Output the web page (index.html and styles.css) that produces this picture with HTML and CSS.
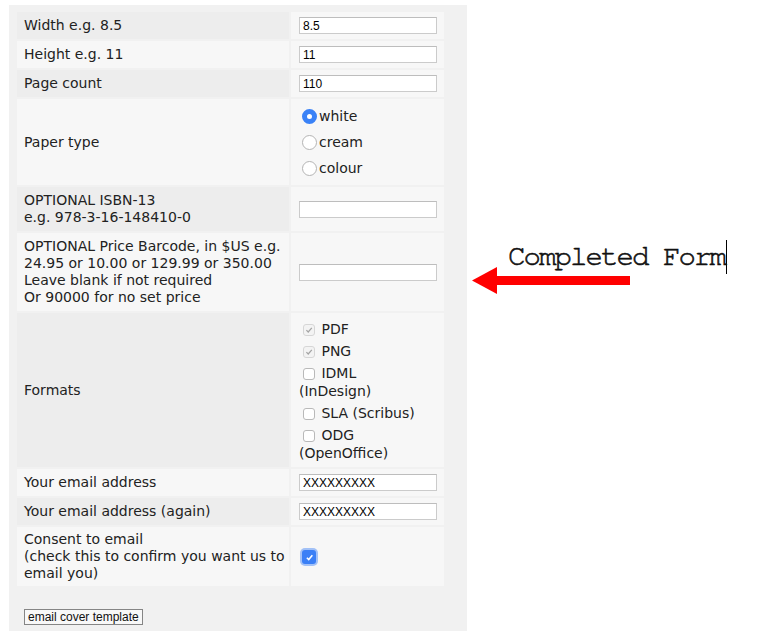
FILE: index.html
```html
<!DOCTYPE html>
<html>
<head>
  <title>Cover order form</title>
  <link rel="stylesheet" href="styles.css">
</head>
<body>
  <div class="panel">
    <form class="order">
      <table class="fields">
        <tr>
          <td class="label">Width e.g. 8.5</td>
          <td class="value"><input type="text" value="8.5"></td>
        </tr>
        <tr>
          <td class="label">Height e.g. 11</td>
          <td class="value"><input type="text" value="11"></td>
        </tr>
        <tr>
          <td class="label">Page count</td>
          <td class="value"><input type="text" value="110"></td>
        </tr>
        <tr>
          <td class="label">Paper type</td>
          <td class="value paper">
            <label><input type="radio" name="paper" checked>white</label>
            <label><input type="radio" name="paper">cream</label>
            <label><input type="radio" name="paper">colour</label>
          </td>
        </tr>
        <tr>
          <td class="label">OPTIONAL ISBN-13<br>e.g. 978-3-16-148410-0</td>
          <td class="value"><input type="text"></td>
        </tr>
        <tr>
          <td class="label">OPTIONAL Price Barcode, in $US e.g.<br>24.95 or 10.00 or 129.99 or 350.00<br>Leave blank if not required<br>Or 90000 for no set price</td>
          <td class="value"><input type="text"></td>
        </tr>
        <tr>
          <td class="label">Formats</td>
          <td class="value formats">
            <label><input type="checkbox" checked disabled> PDF</label>
            <label><input type="checkbox" checked disabled> PNG</label>
            <label><input type="checkbox"> IDML (InDesign)</label>
            <label><input type="checkbox"> SLA (Scribus)</label>
            <label><input type="checkbox"> ODG (OpenOffice)</label>
          </td>
        </tr>
        <tr>
          <td class="label">Your email address</td>
          <td class="value"><input type="text" value="XXXXXXXXX"></td>
        </tr>
        <tr>
          <td class="label">Your email address (again)</td>
          <td class="value"><input type="text" value="XXXXXXXXX"></td>
        </tr>
        <tr>
          <td class="label consent-text">Consent to email<br>(check this to confirm you want us to email you)</td>
          <td class="value"><input type="checkbox" class="consent" checked></td>
        </tr>
      </table>
      <div class="actions">
        <button type="button">email cover template</button>
      </div>
    </form>
  </div>

  <div class="note">
    <div class="typed">Completed Form</div>
    <svg class="arrow" width="158" height="27" viewBox="0 0 158 27">
      <polygon points="0,13.5 25,0 25,27" fill="#ff0000"/>
      <rect x="24" y="9" width="134" height="9" fill="#ff0000"/>
    </svg>
  </div>
</body>
</html>
```

FILE: styles.css
```css
body {
  margin: 0;
  padding: 5px 0 0 9px;
  background: #fff;
  display: flex;
  align-items: flex-start;
  font-family: "DejaVu Sans", Verdana, sans-serif;
  color: #222;
}

.panel {
  width: 458px;
  box-sizing: border-box;
  padding: 5px 6px 6px;
  background: #f1f1f1;
}

.fields {
  table-layout: fixed;
  width: 431px;
  border-spacing: 2px;
  font-size: 14px;
  line-height: 17px;
}

.fields td {
  box-sizing: border-box;
  padding: 5px 7px;
  vertical-align: middle;
}

.fields td.label {
  width: 272px;
  padding-right: 3px;
  background: #f7f7f7;
}

.fields tr:nth-child(odd) td.label {
  background: #ededed;
}

.fields td.value {
  padding-left: 8px;
  background: #f7f7f7;
}

.fields td.consent-text {
  padding-top: 4px;
  padding-bottom: 4px;
}

.value input[type="text"] {
  display: block;
  box-sizing: border-box;
  width: 138px;
  height: 17px;
  margin: 0;
  padding: 0 3px;
  border: 1px solid #cbcbcb;
  border-top-color: #bdbdbd;
  background: #fff;
  font-family: "Liberation Sans", Arial, sans-serif;
  font-size: 12px;
  color: #000;
}

/* radios */
.fields td.paper {
  padding-top: 4px;
  padding-bottom: 4px;
}

.paper label {
  display: flex;
  align-items: center;
  height: 26px;
}

.paper input {
  appearance: none;
  box-sizing: border-box;
  width: 15px;
  height: 15px;
  margin: 0 2px 0 3px;
  border: 1px solid #b4b4b4;
  border-radius: 50%;
  background: #fff;
}

.paper input:checked {
  border: 5px solid #3a82f7;
  background: #fff;
}

/* checkboxes */
.fields td.formats {
  padding-bottom: 3px;
}

.formats label {
  display: block;
  max-width: 125px;
  padding: 2px 0;
  line-height: 18px;
}

.formats input,
.consent {
  appearance: none;
  box-sizing: border-box;
  width: 12px;
  height: 12px;
  margin: 2px 2px 2px 4px;
  vertical-align: middle;
  border: 1px solid #b9b9b9;
  border-radius: 3px;
  background: #fff;
}

.formats input:checked {
  border-color: #d6d6d6;
  background: #f3f3f3 url("data:image/svg+xml;utf8,<svg xmlns='http://www.w3.org/2000/svg' viewBox='0 0 10 10'><path d='M2.4 5.2 L4.2 7 L7.8 2.8' fill='none' stroke='%23a3a3a3' stroke-width='1.2'/></svg>") center / 10px 10px no-repeat;
}

.consent {
  width: 14px;
  height: 14px;
  margin: 0 0 0 3px;
  vertical-align: middle;
  border: none;
  background: #3a7ff6 url("data:image/svg+xml;utf8,<svg xmlns='http://www.w3.org/2000/svg' viewBox='0 0 10 10'><path d='M2.6 5.2 L4.3 6.9 L7.6 3' fill='none' stroke='white' stroke-width='1.4'/></svg>") center / 11px 11px no-repeat;
  box-shadow: 0 0 0 2px rgba(58, 127, 246, 0.45);
}

.actions {
  margin-top: 21px;
  padding-left: 9px;
}

.actions button {
  display: block;
  height: 16px;
  margin: 0;
  padding: 0 3px;
  border: 1px solid #858585;
  background: #f8f8f8;
  font-family: "Liberation Sans", Arial, sans-serif;
  font-size: 12px;
  line-height: 14px;
  color: #111;
}

/* annotation */
.note {
  display: flex;
  flex-direction: column;
  align-items: flex-start;
  margin: 235px 0 0 5px;
}

.typed {
  margin-left: 36px;
  padding-right: 1px;
  border-right: 1px solid #000;
  font-family: "Nimbus Mono PS", "FreeMono", "Courier 10 Pitch", "Liberation Mono", monospace;
  font-size: 29px;
  letter-spacing: -1.9px;
  line-height: 34px;
  color: #111;
  -webkit-text-stroke: 0.6px #111;
}

.arrow {
  display: block;
  margin-top: -7px;
}
```
